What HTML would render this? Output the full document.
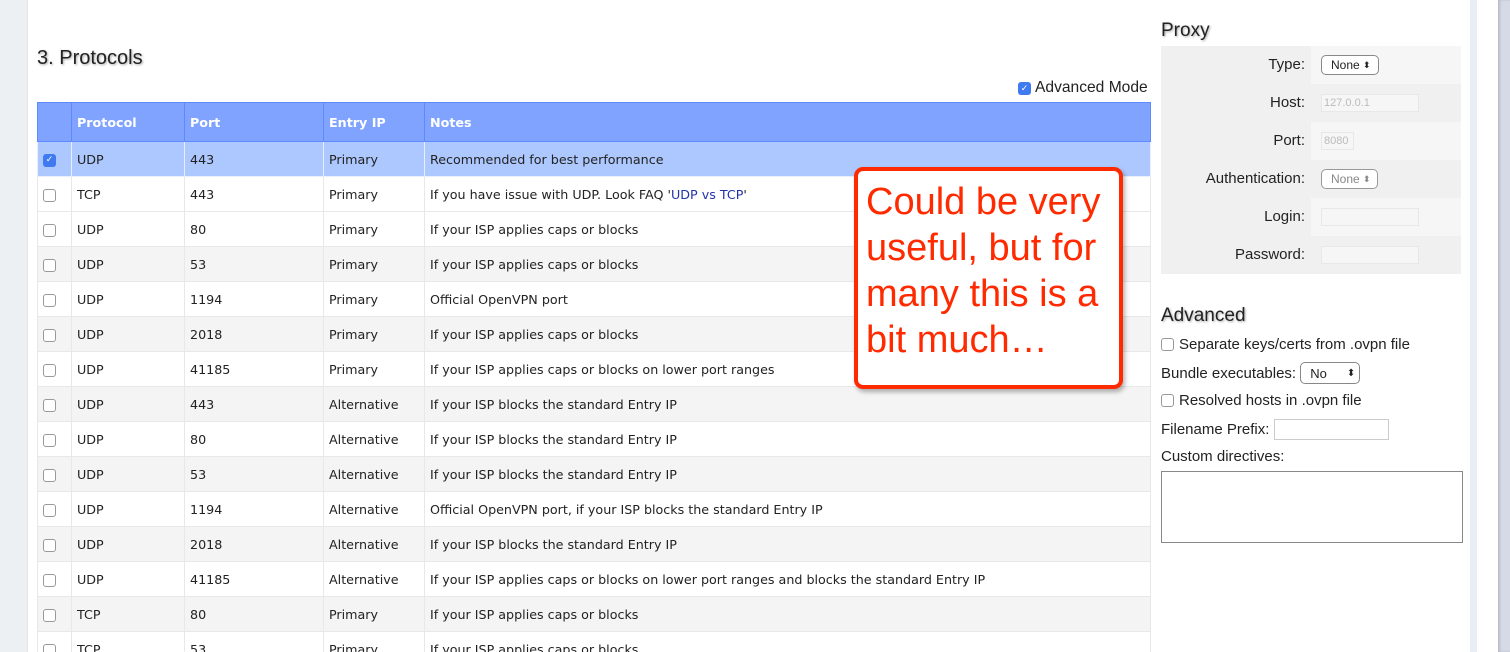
<!DOCTYPE html>
<html><head><meta charset="utf-8"><style>
*{box-sizing:border-box;margin:0;padding:0}
html{width:1510px;height:652px;overflow:hidden}
body{width:1510px;height:652px;overflow:hidden;background:#fff;position:relative;font-family:"Liberation Sans",sans-serif;color:#222}
.abs{position:absolute}
#lstrip{left:0;top:0;width:28px;height:652px;background:#edf0f3;border-right:1px solid #e2e6ea}
#r1{left:1470px;top:0;width:7px;height:652px;background:#e9edf4}
#r2{left:1498px;top:0;width:12px;height:652px;background:#d6dae7;box-shadow:inset 2px 0 2px #b9bcc6}
h2{position:absolute;font-weight:normal;font-size:20px;text-shadow:1px 1px 2px rgba(0,0,0,.35);color:#222}
table{position:absolute;left:37px;top:102px;width:1114px;border-collapse:collapse;font-family:"DejaVu Sans",Verdana,sans-serif;font-size:12.7px}
td,th{height:35px;border:1px solid #e8e8e8;padding:0 5px;text-align:left;white-space:nowrap}
th{background:#7fa3ff;color:#fff;font-weight:bold;height:39px;border:1px solid #5f89ff}
tr.sel td{background:#adc8ff;border-color:#e8eefc}
tr.g td{background:#f4f4f4}
.cb{display:inline-block;width:13px;height:13px;border:1px solid #999;border-radius:3px;background:#fff;vertical-align:middle}
.cbc{display:inline-block;width:13px;height:13px;border-radius:3px;background:#3f7af0;color:#fff;font-size:9px;line-height:13px;text-align:center;vertical-align:middle}
a{color:#2233aa;text-decoration:none}
#callout{left:854px;top:167px;width:269px;height:222px;border:4px solid #ff2a00;border-radius:9px;background:#fff;box-shadow:2px 3px 5px rgba(0,0,0,.3);color:#ff2a00;font-size:38px;line-height:46px;padding:8px 0 0 8px}
#proxy{left:1161px;top:46px;width:300px;height:228px;background:#f0f0f0}
.pr{height:38px;display:flex;font-size:15px}
.pr .l{width:150px;text-align:right;padding-right:6px;line-height:38px}
.pr .v{flex:1;display:flex;align-items:center;padding-left:10px}
.pr.lt .v{background:#f6f6f6}
.sel2{border:1px solid #888;border-radius:5px;height:20px;font-size:12px;padding:0 4px 0 9px;display:flex;align-items:center;background:#fff}
.inp{border:1px solid #e8e8e8;background:#f6f6f6;height:18px;width:98px;font-size:11px;color:#bbb;padding-left:2px;line-height:17px}
.adv{left:1161px;font-size:15px;color:#222;display:flex;align-items:center}
</style></head><body>
<div id="lstrip" class="abs"></div><div id="r1" class="abs"></div><div id="r2" class="abs"></div>
<h2 style="left:37px;top:47px">3. Protocols</h2>
<div class="abs" style="left:1018px;top:79px;font-size:15.6px;display:flex;align-items:center"><span class="cbc">✓</span><span style="margin-left:4px">Advanced Mode</span></div>
<table>
<tr><th style="width:34px"></th><th style="width:113px">Protocol</th><th style="width:139px">Port</th><th style="width:101px">Entry IP</th><th>Notes</th></tr>
<tr class="sel"><td><span class="cbc">✓</span></td><td>UDP</td><td>443</td><td>Primary</td><td>Recommended for best performance</td></tr>
<tr><td><span class="cb"></span></td><td>TCP</td><td>443</td><td>Primary</td><td>If you have issue with UDP. Look FAQ '<a>UDP vs TCP</a>'</td></tr>
<tr><td><span class="cb"></span></td><td>UDP</td><td>80</td><td>Primary</td><td>If your ISP applies caps or blocks</td></tr>
<tr class="g"><td><span class="cb"></span></td><td>UDP</td><td>53</td><td>Primary</td><td>If your ISP applies caps or blocks</td></tr>
<tr><td><span class="cb"></span></td><td>UDP</td><td>1194</td><td>Primary</td><td>Official OpenVPN port</td></tr>
<tr class="g"><td><span class="cb"></span></td><td>UDP</td><td>2018</td><td>Primary</td><td>If your ISP applies caps or blocks</td></tr>
<tr><td><span class="cb"></span></td><td>UDP</td><td>41185</td><td>Primary</td><td>If your ISP applies caps or blocks on lower port ranges</td></tr>
<tr class="g"><td><span class="cb"></span></td><td>UDP</td><td>443</td><td>Alternative</td><td>If your ISP blocks the standard Entry IP</td></tr>
<tr><td><span class="cb"></span></td><td>UDP</td><td>80</td><td>Alternative</td><td>If your ISP blocks the standard Entry IP</td></tr>
<tr class="g"><td><span class="cb"></span></td><td>UDP</td><td>53</td><td>Alternative</td><td>If your ISP blocks the standard Entry IP</td></tr>
<tr><td><span class="cb"></span></td><td>UDP</td><td>1194</td><td>Alternative</td><td>Official OpenVPN port, if your ISP blocks the standard Entry IP</td></tr>
<tr class="g"><td><span class="cb"></span></td><td>UDP</td><td>2018</td><td>Alternative</td><td>If your ISP blocks the standard Entry IP</td></tr>
<tr><td><span class="cb"></span></td><td>UDP</td><td>41185</td><td>Alternative</td><td>If your ISP applies caps or blocks on lower port ranges and blocks the standard Entry IP</td></tr>
<tr class="g"><td><span class="cb"></span></td><td>TCP</td><td>80</td><td>Primary</td><td>If your ISP applies caps or blocks</td></tr>
<tr><td><span class="cb"></span></td><td>TCP</td><td>53</td><td>Primary</td><td>If your ISP applies caps or blocks</td></tr>
</table>
<div id="callout" class="abs">Could be very useful, but for many this is a bit much…</div>
<h2 style="left:1161px;top:20px;font-size:19px">Proxy</h2>
<div id="proxy" class="abs">
<div class="pr lt"><div class="l">Type:</div><div class="v"><div class="sel2" style="width:58px">None&nbsp;<span style="font-size:9px">⬍</span></div></div></div>
<div class="pr"><div class="l">Host:</div><div class="v"><div class="inp">127.0.0.1</div></div></div>
<div class="pr lt"><div class="l">Port:</div><div class="v"><div class="inp" style="width:33px">8080</div></div></div>
<div class="pr"><div class="l">Authentication:</div><div class="v"><div class="sel2" style="width:57px;color:#888;border-color:#999">None&nbsp;<span style="font-size:9px">⬍</span></div></div></div>
<div class="pr lt"><div class="l">Login:</div><div class="v"><div class="inp"></div></div></div>
<div class="pr"><div class="l">Password:</div><div class="v"><div class="inp"></div></div></div>
</div>
<h2 style="left:1161px;top:305px;font-size:19px">Advanced</h2>
<div class="abs adv" style="top:336px"><span class="cb"></span><span style="margin-left:5px">Separate keys/certs from .ovpn file</span></div>
<div class="abs adv" style="top:362px">Bundle executables:&nbsp;<div class="sel2" style="width:60px;height:22px;font-size:13px">No<span style="margin-left:auto;font-size:10px">⬍</span></div></div>
<div class="abs adv" style="top:392px"><span class="cb"></span><span style="margin-left:5px">Resolved hosts in .ovpn file</span></div>
<div class="abs adv" style="top:419px">Filename Prefix:&nbsp;<div style="width:115px;height:21px;border:1px solid #ccc"></div></div>
<div class="abs adv" style="top:448px">Custom directives:</div>
<div class="abs" style="left:1161px;top:471px;width:302px;height:72px;border:1px solid #888"></div>
</body></html>
